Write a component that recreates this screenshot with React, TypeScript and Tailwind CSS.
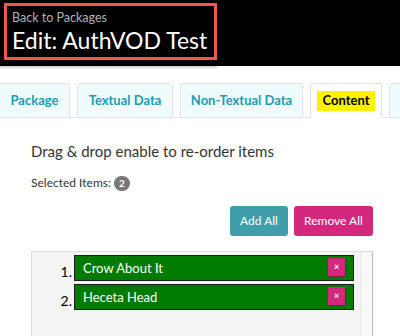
// Edit package page — content tab with selected items list
const TABS = [
  { label: 'Package', w: 'w-[71px]' },
  { label: 'Textual Data', w: 'w-[96px]' },
  { label: 'Non-Textual Data', w: 'w-[123px]' },
];

const ITEMS = ['Crow About It', 'Heceta Head'];

export default function App() {
  return (
    <div className="w-[400px] h-[336px] overflow-hidden bg-white font-['Lato','Open_Sans',sans-serif] text-[#333]">
      {/* Header */}
      <div className="h-[66px] bg-black pt-[3px] pl-[4px]">
        <div className="w-[213px] h-[57px] border-[3px] border-[#f2574c] pl-[5px] pt-[4px]">
          <div className="text-[12.5px] leading-[16px] text-[#b3b3b3]">Back to Packages</div>
          <div className="mt-[1px] text-[23px] leading-[27px] text-white">Edit: AuthVOD Test</div>
        </div>
      </div>
      <div className="h-[3px] w-[217px] bg-gradient-to-b from-[#c8c8c8] to-white" />

      {/* Tabs */}
      <div className="mt-[14px] flex gap-[7px] border-b border-[#e4e4e4] ml-[-1px] w-[460px]">
        {TABS.map((t) => (
          <div
            key={t.label}
            className={`${t.w} shrink-0 h-[35px] mb-[-1px] flex items-center justify-center rounded-t-[3px] border border-[#e2e2e2] bg-[#effbfd] text-[13px] font-bold text-[#1b9db3]`}
          >
            {t.label}
          </div>
        ))}
        <div className="w-[72px] shrink-0 h-[35px] mb-[-1px] flex items-center justify-center rounded-t-[3px] border border-[#e2e2e2] border-b-white bg-white">
          <span className="bg-[#fff200] px-[6px] h-[20px] flex items-center text-[13px] font-bold text-black">Content</span>
        </div>
        <div className="w-[40px] shrink-0 h-[35px] mb-[-1px] rounded-t-[3px] border border-[#e2e2e2] bg-[#effbfd]" />
      </div>

      {/* Content */}
      <div className="pl-[31px] pr-[27px]">
        <div className="mt-[23px] text-[15px] leading-[20px] text-[#333]">Drag &amp; drop enable to re-order items</div>
        <div className="mt-[13px] flex items-center gap-[3px] text-[12px] leading-[17px]">
          <span>Selected Items:</span>
          <span className="w-[16px] h-[15px] mt-[1px] rounded-full bg-[#777] text-white text-[10px] font-bold flex items-center justify-center">2</span>
        </div>
        <div className="mt-[15px] flex justify-end gap-[6px]">
          <button className="w-[58px] h-[30px] rounded-[3px] bg-[#3f9ea9] text-white text-[12px]">Add All</button>
          <button className="w-[79px] h-[30px] rounded-[3px] bg-[#d4287e] text-white text-[12px]">Remove All</button>
        </div>

        {/* Selected list */}
        <div className="mt-[15px] h-[100px] flex border-t border-l border-[#dedede] border-r border-r-[#b8b8b8] bg-[#f4f4f4]">
          <div className="flex-1 pt-[3px] pr-[6px] flex flex-col gap-[3px]">
            {ITEMS.map((item, i) => (
              <div key={item} className="flex items-end">
                <span className="w-[42px] pr-[2px] text-right text-[14px] leading-[17px] text-black mb-[1px]">{i + 1}.</span>
                <div className="flex-1 h-[26px] flex items-start justify-between border border-[#1e1e1e] bg-[#007b00] pl-[8px] pr-[8px]">
                  <span className="pt-[4px] text-[13px] leading-[16px] text-white">{item}</span>
                  <span className="mt-[2px] w-[17px] h-[18px] flex items-center justify-center bg-[#d4287e] text-white text-[9px] font-bold shadow-[1px_1px_0_#7d1a4b]">×</span>
                </div>
              </div>
            ))}
          </div>
          <div className="w-[12px] border-l border-[#e6e6e6] bg-[#f8f8f8]" />
        </div>
      </div>
    </div>
  );
}
